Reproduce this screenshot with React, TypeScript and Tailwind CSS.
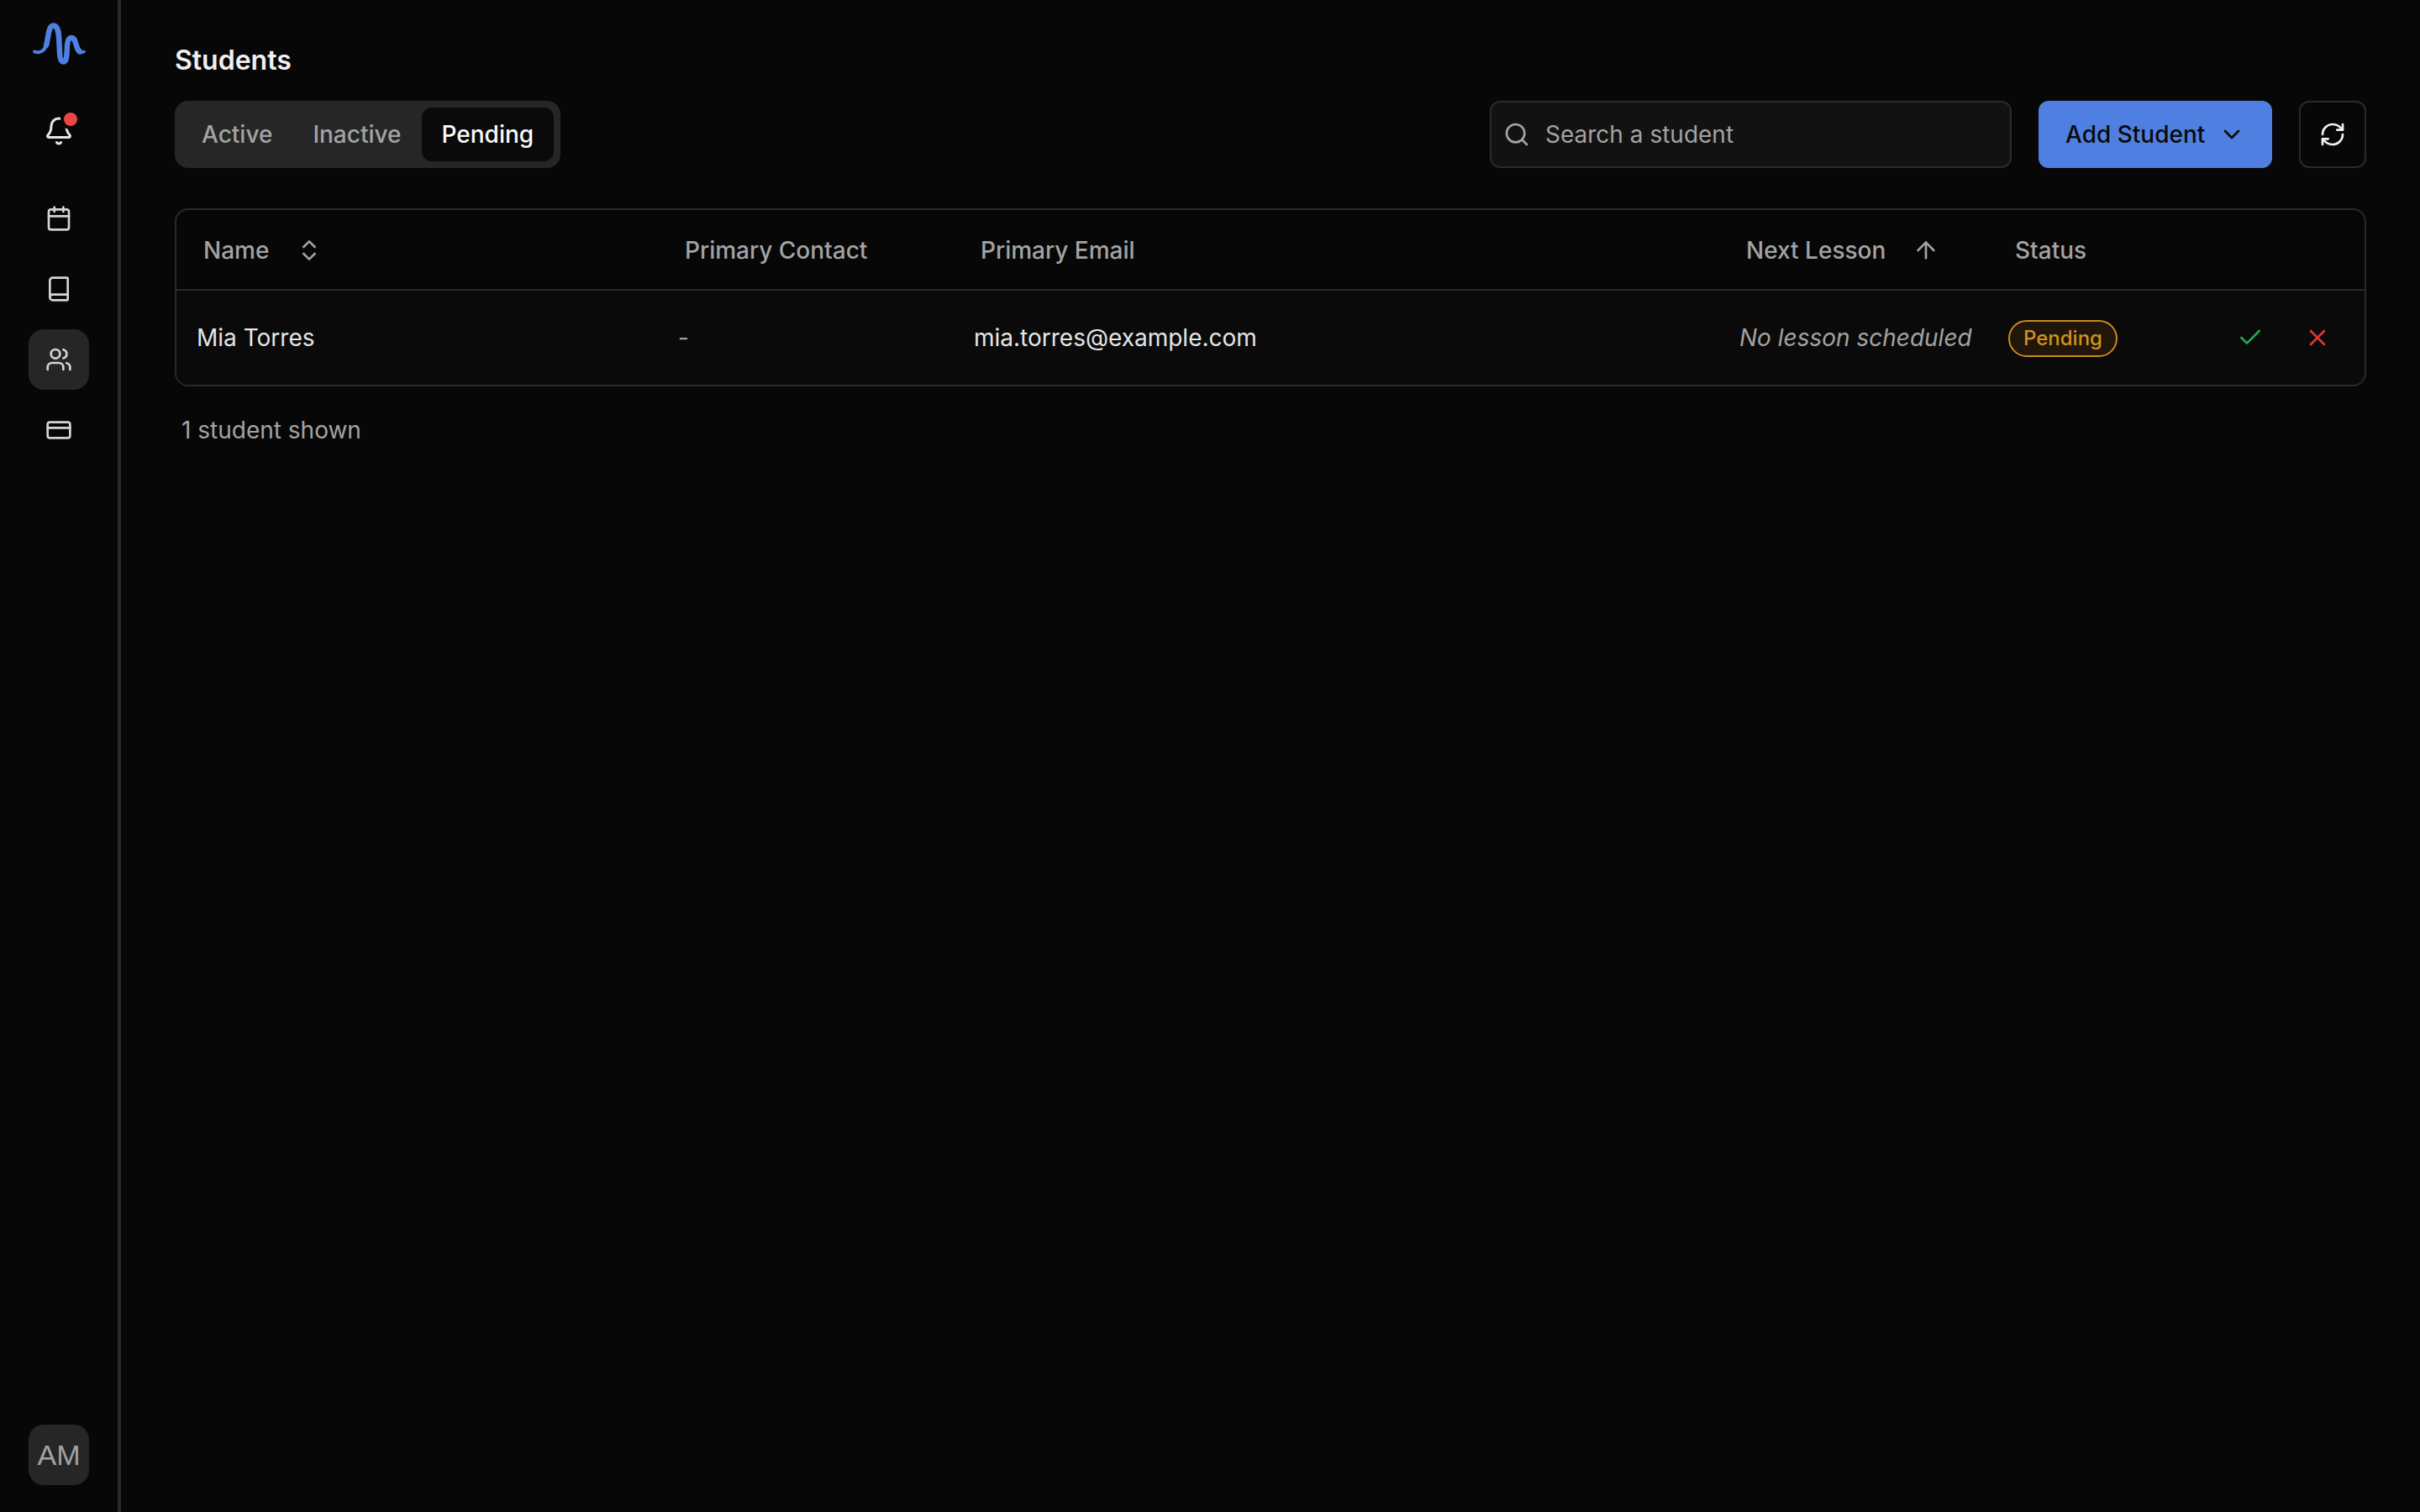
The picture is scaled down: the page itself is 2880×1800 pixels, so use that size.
import { ArrowUp, Bell, Book, Calendar, Check, ChevronDown, ChevronsUpDown, CreditCard, RefreshCw, Search, Users, X } from "lucide-react";

function Logo() {
  return (
    <svg viewBox="0 0 72 72" className="size-[72px]" fill="none" stroke="#4f80e1" strokeLinecap="round" strokeLinejoin="round">
      <path d="M7 45.500C12 47.500 18 46 21 38" strokeWidth="4" />
      <path
        d="M21 38C23.500 31 23 14.500 29.500 14.500C36 14.500 36 26 36.500 36C37 48 37 57.500 41.500 57.500C46 57.500 45.500 47 46 38C46.500 32 47.500 29 51 29C55 29 55.500 34 57 38.500C58 42 59.500 44.500 61 45.500"
        strokeWidth="6.500"
      />
      <path d="M59 44C61.500 46.500 64 46.500 66 45.500" strokeWidth="3.500" />
    </svg>
  );
}

function NavItem({ active, children }: { active?: boolean; children: React.ReactNode }) {
  return (
    <div className={active ? "flex size-[72px] items-center justify-center rounded-[18px] bg-[#262626] text-[#d4d4d4]" : "flex size-[72px] items-center justify-center rounded-[18px] text-[#d4d4d4]"}>
      {children}
    </div>
  );
}

function Sidebar() {
  return (
    <aside className="flex w-[144px] shrink-0 flex-col items-center border-r-4 border-[#2a2a2a] pt-4 pb-8">
      <Logo />
      <div className="relative mt-8 flex size-[72px] items-center justify-center text-[#e5e5e5]">
        <Bell size={36} strokeWidth={2} />
        <span className="absolute top-[10px] right-[10px] size-[24px] rounded-full border-4 border-[#070707] bg-[#ef4444]" />
      </div>
      <nav className="mt-8 flex flex-col gap-3">
        <NavItem><Calendar size={32} strokeWidth={2} /></NavItem>
        <NavItem><Book size={32} strokeWidth={2} /></NavItem>
        <NavItem active><Users size={32} strokeWidth={2} /></NavItem>
        <NavItem><CreditCard size={32} strokeWidth={2} /></NavItem>
      </nav>
      <div className="mt-auto flex size-[72px] items-center justify-center rounded-[18px] bg-[#262626] font-['Liberation_Sans',sans-serif] text-[34px] text-[#a3a3a3]">
        AM
      </div>
    </aside>
  );
}

export default function App() {
  return (
    <div className="flex h-screen w-full bg-[#070707] font-['Inter',sans-serif] text-[28px] text-[#e5e5e5]">
      <Sidebar />
      <main className="flex min-w-0 flex-1 flex-col px-16 pt-12">
        <h1 className="text-[32px] leading-[48px] font-semibold text-[#f0f0f0]">Students</h1>

        <div className="mt-6 flex items-center">
          <div className="flex h-20 items-center rounded-[16px] bg-[#262626] p-2 leading-10 font-medium">
            <button className="rounded-[12px] px-6 py-3 text-[#a3a3a3]">Active</button>
            <button className="rounded-[12px] px-6 py-3 text-[#a3a3a3]">Inactive</button>
            <button className="rounded-[12px] bg-[#0a0a0a] px-6 py-3 text-[#fafafa]">Pending</button>
          </div>

          <div className="ml-auto flex h-20 w-[621px] items-center gap-[18px] rounded-[12px] border-2 border-[#2a2a2a] bg-[#121212] pl-[14px] pr-4">
            <Search size={32} strokeWidth={2} className="shrink-0 text-[#a3a3a3]" />
            <input
              className="w-full bg-transparent text-[28px] outline-none placeholder:text-[#a3a3a3]"
              placeholder="Search a student"
            />
          </div>

          <button className="ml-8 flex h-20 w-[278px] items-center gap-4 rounded-[12px] bg-[#4f80e1] pl-8 font-medium text-[#0a0a0a]">
            Add Student
            <ChevronDown size={32} strokeWidth={2} />
          </button>

          <button className="ml-8 flex size-20 items-center justify-center rounded-[12px] border-2 border-[#2a2a2a] text-[#f0f0f0]">
            <RefreshCw size={32} strokeWidth={2} />
          </button>
        </div>

        <div className="mt-12 overflow-hidden rounded-[16px] border-2 border-[#2a2a2a]">
          <table className="w-full table-fixed border-collapse text-left">
            <colgroup>
              <col className="w-[573px]" />
              <col className="w-[352px]" />
              <col className="w-[911px]" />
              <col className="w-[320px]" />
              <col className="w-[220px]" />
              <col />
            </colgroup>
            <thead>
              <tr className="h-[95px] border-b-2 border-[#2a2a2a] text-[#a3a3a3]">
                <th className="pt-[2px] pl-8 font-medium">
                  <span className="flex items-center gap-8">
                    Name
                    <ChevronsUpDown size={32} strokeWidth={2} />
                  </span>
                </th>
                <th className="pt-[2px] pl-8 font-medium">Primary Contact</th>
                <th className="pt-[2px] pl-8 font-medium">Primary Email</th>
                <th className="pt-[2px] pl-8 font-medium">
                  <span className="flex items-center gap-8">
                    Next Lesson
                    <ArrowUp size={32} strokeWidth={2} />
                  </span>
                </th>
                <th className="pt-[2px] pl-8 font-medium">Status</th>
                <th />
              </tr>
            </thead>
            <tbody>
              <tr className="h-[113px] bg-[#0a0a0a]">
                <td className="pl-6">Mia Torres</td>
                <td className="pl-6 text-[#a3a3a3]">-</td>
                <td className="pl-6">mia.torres@example.com</td>
                <td className="whitespace-nowrap pl-6 text-[#a3a3a3] italic">No lesson scheduled</td>
                <td className="pl-6">
                  <span className="inline-flex h-11 items-center rounded-full border-2 border-[#c98b1e] bg-[#20160a] px-4 text-[24px] font-medium text-[#cf921e]">
                    Pending
                  </span>
                </td>
                <td className="pr-6">
                  <div className="flex justify-end gap-4">
                    <button className="p-4 text-[#1fa855]"><Check size={32} strokeWidth={2} /></button>
                    <button className="p-4 text-[#dc3535]"><X size={32} strokeWidth={2} /></button>
                  </div>
                </td>
              </tr>
            </tbody>
          </table>
        </div>

        <p className="mt-8 pl-2 leading-10 text-[#a3a3a3]">1 student shown</p>
      </main>
    </div>
  );
}
